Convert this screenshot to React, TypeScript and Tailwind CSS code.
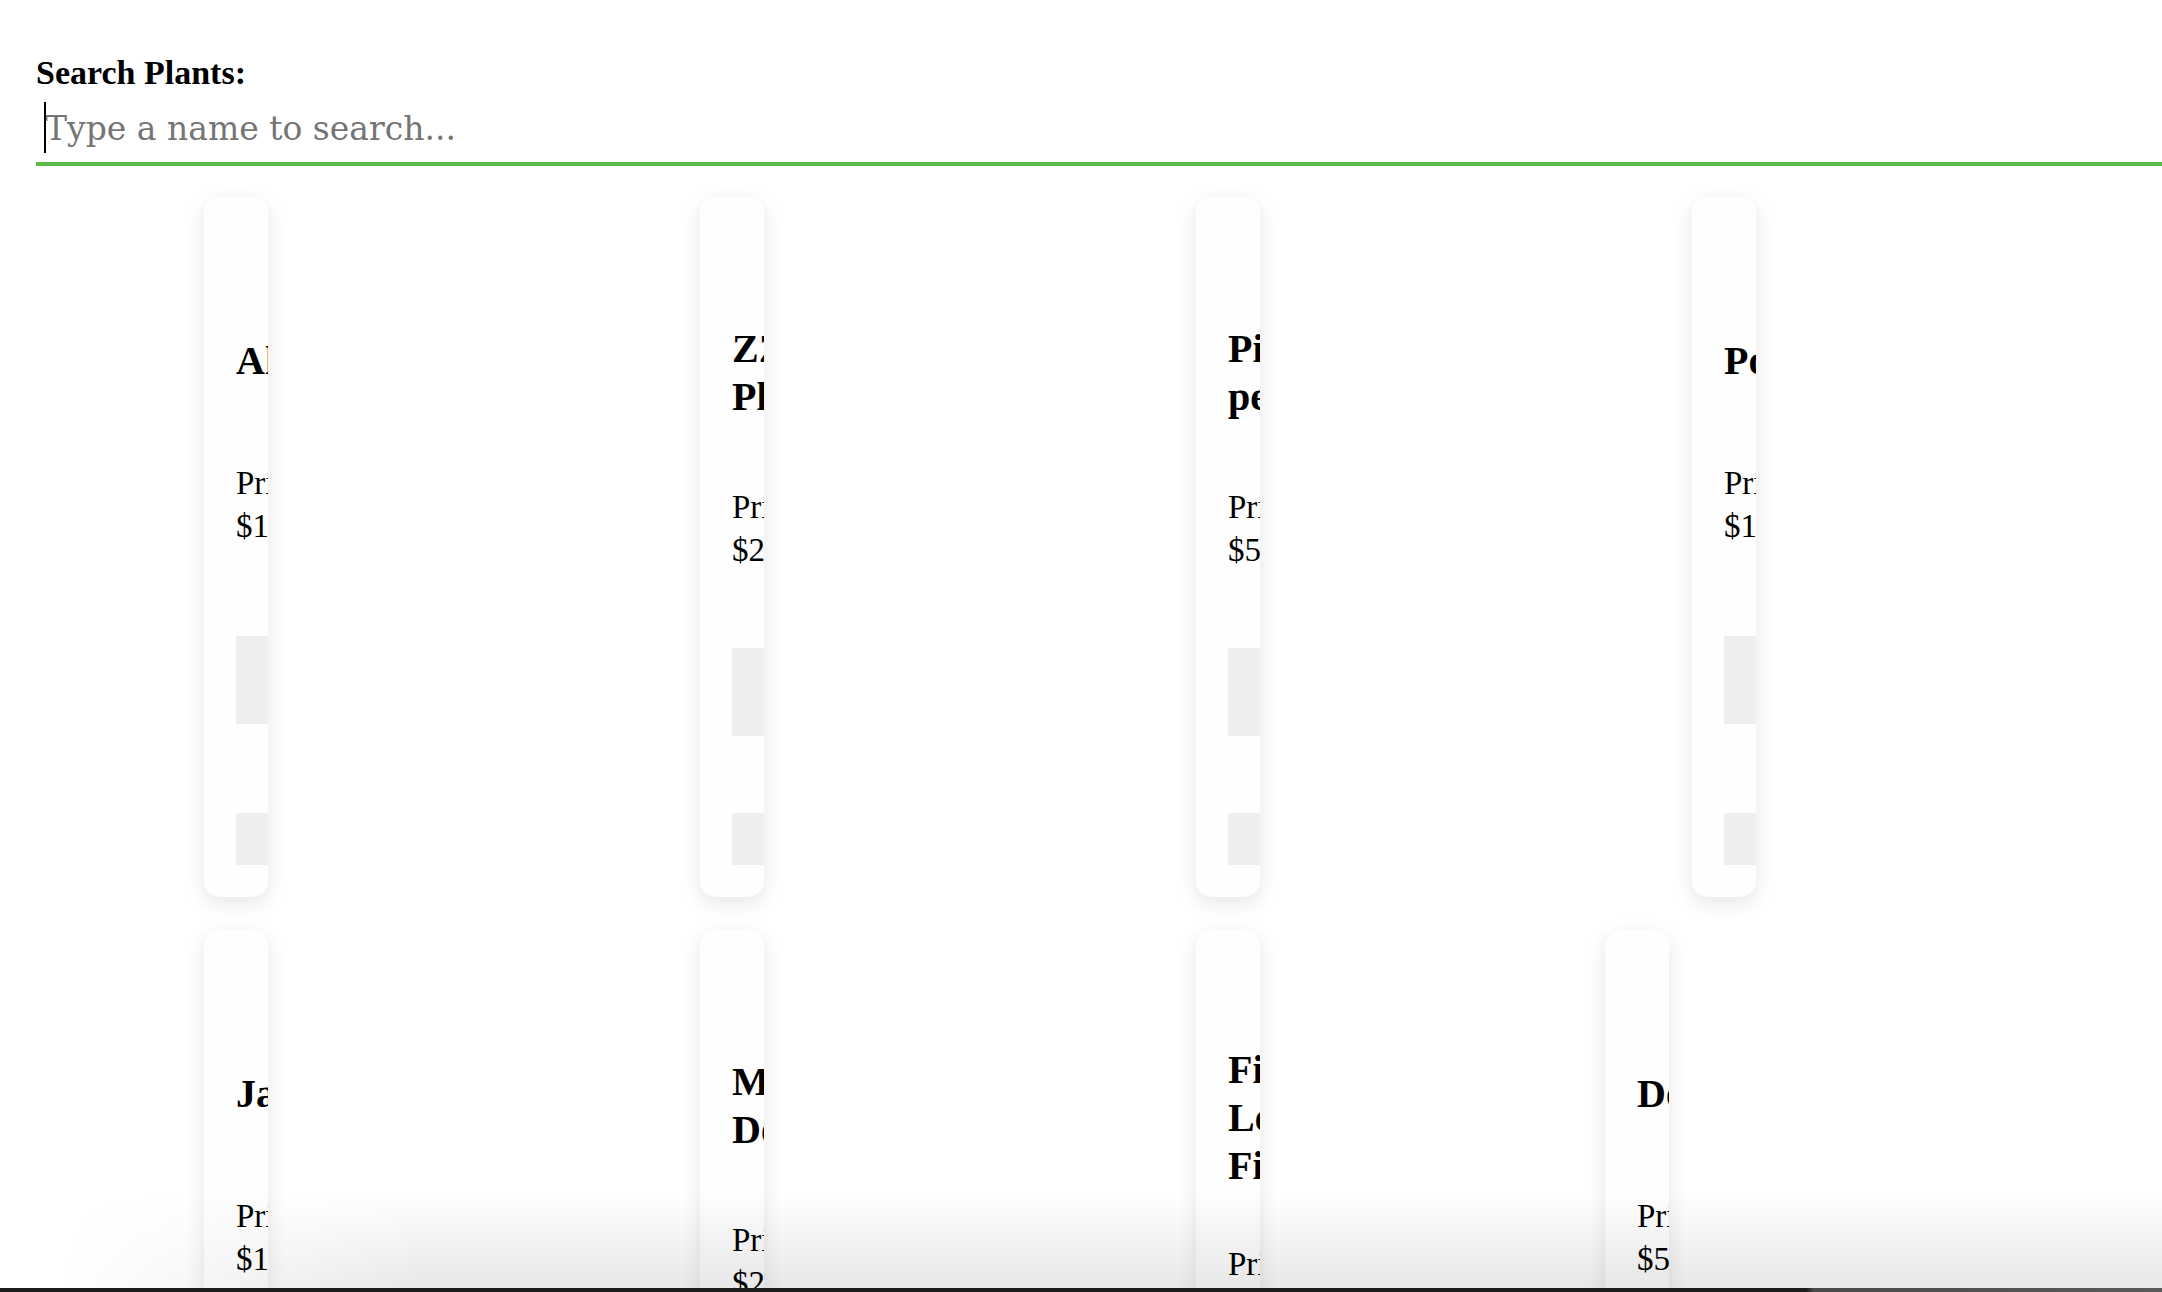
import React from "react";

type Plant = { name: string; price: string; shift?: boolean };

const plants: Plant[] = [
  { name: "Aloe", price: "$15.99" },
  { name: "ZZ Plant", price: "$25.00" },
  { name: "Pilea peperomioides", price: "$5.99" },
  { name: "Pothos", price: "$12.99" },
  { name: "Jade", price: "$10.99" },
  { name: "Monstera Deliciosa", price: "$29.99" },
  { name: "Fiddle Leaf Fig", price: "$45.00" },
  { name: "Dendrobium", price: "$50.00", shift: true },
];

function Card({ plant }: { plant: Plant }) {
  return (
    <div
      className={
        "box-border flex h-[700px] w-[64px] flex-col justify-between overflow-hidden rounded-[16px] bg-[#fefefe] p-[32px] font-['Liberation_Serif',serif] text-black shadow-[0_6px_20px_rgba(0,0,0,0.1)] " +
        (plant.shift ? "-ml-[87px]" : "")
      }
    >
      <div className="h-[30px] shrink-0" />
      <h2 className="shrink-0 text-[40px] font-bold leading-[48px]">{plant.name}</h2>
      <p className="mb-[10px] shrink-0 text-[33px] leading-[43px]">Price: {plant.price}</p>
      <div className="mb-[12px] h-[88px] w-[240px] shrink-0 bg-[#eeeeee]" />
      <div className="h-[52px] w-[240px] shrink-0 bg-[#eeeeee]" />
    </div>
  );
}

export default function App() {
  return (
    <div className="relative h-[1292px] w-full overflow-hidden bg-white">
      <div className="pl-[36px] pt-[54px]">
        <label className="block font-['Liberation_Serif',serif] text-[34px] font-bold leading-[38px] text-black">
          Search Plants:
        </label>
        <div className="relative">
          <input
            type="text"
            placeholder="Type a name to search..."
            className="box-border block h-[74px] w-full border-0 border-b-4 border-solid border-[#5cb848] bg-transparent pb-[14px] pl-[9px] pt-[16px] font-['DejaVu_Serif',serif] text-[33px] leading-[40px] text-black caret-transparent outline-none placeholder:text-[#757575]"
          />
          <span className="pointer-events-none absolute left-[8px] top-[10px] h-[51px] w-[2px] bg-black" />
        </div>
        <div className="mt-[31px] grid grid-cols-[repeat(4,496px)] gap-y-[33px] pl-[168px]">
          {plants.map((p) => (
            <Card key={p.name} plant={p} />
          ))}
        </div>
      </div>

      <div className="pointer-events-none absolute bottom-[4px] left-0 right-0 h-[96px] bg-[linear-gradient(to_bottom,rgba(0,0,0,0),rgba(0,0,0,0.09))] [mask-image:linear-gradient(to_right,transparent_60px,black_420px)]" />
      <div className="pointer-events-none absolute bottom-0 left-0 right-0 h-[4px] bg-[linear-gradient(to_right,#1c1c1c_0,#1c1c1c_1806px,#4a4a4a_1814px,#5a5a5a_100%)]" />
    </div>
  );
}
